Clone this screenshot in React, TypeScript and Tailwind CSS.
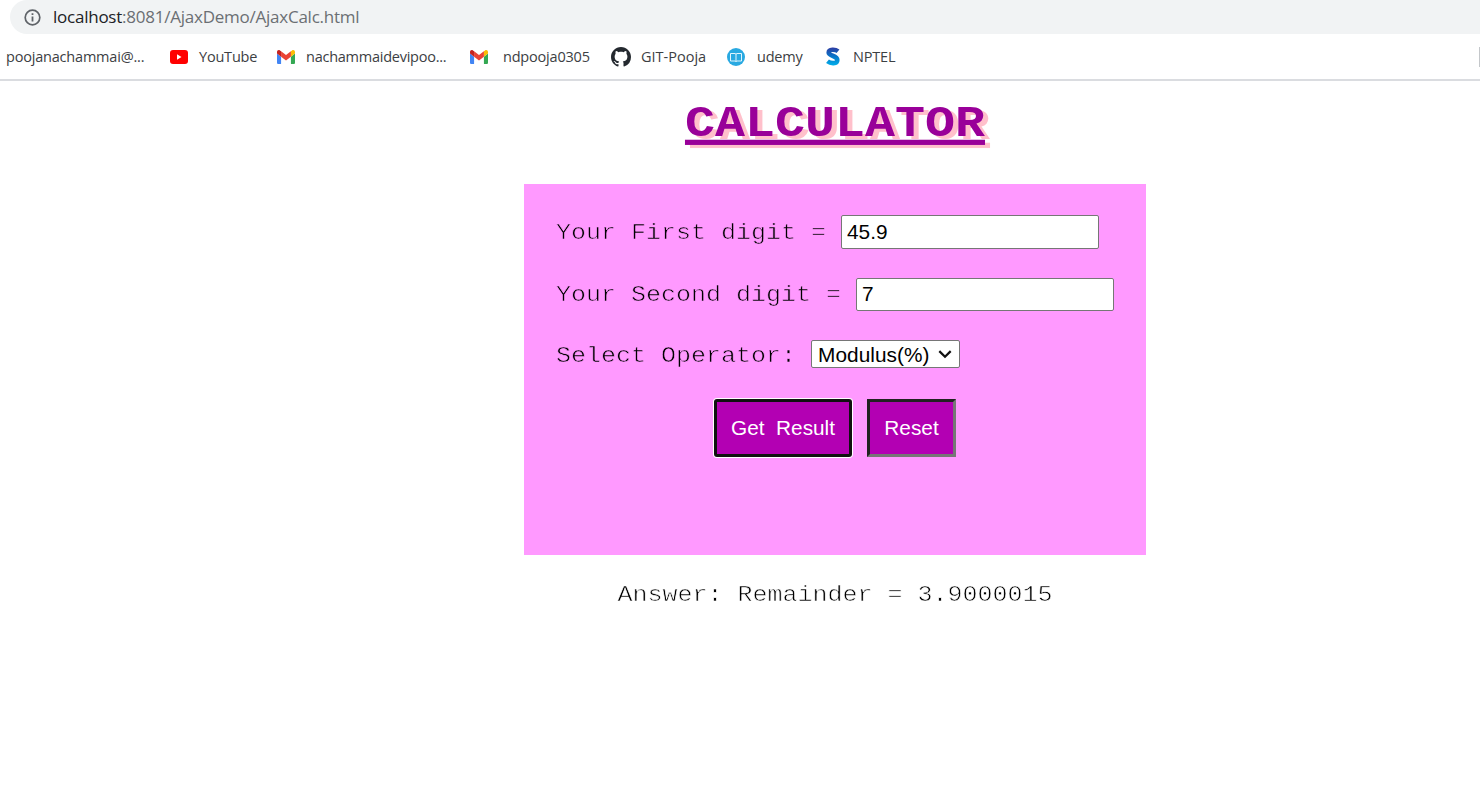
import { useState } from "react";
import type { ReactNode } from "react";

function InfoIcon() {
  return (
    <svg className="block size-[17px]" viewBox="0 0 17 17" fill="none">
      <circle cx="8.5" cy="8.5" r="7.3" stroke="#5f6368" strokeWidth="1.7" />
      <path d="M8.5 7.6v5M8.5 4.3v1.8" stroke="#5f6368" strokeWidth="1.8" />
    </svg>
  );
}

function YouTubeIcon() {
  return (
    <svg className="block h-[14px] w-[18px]" viewBox="0 0 18 14">
      <rect width="18" height="14" rx="3" fill="#f00" />
      <path d="M7 4.3v5.4L11.500 7z" fill="#fff" />
    </svg>
  );
}

function GmailIcon() {
  return (
    <svg className="block h-[14px] w-[18px]" viewBox="52 42 88 66" preserveAspectRatio="none">
      <path fill="#4285f4" d="M58 108h14V74L52 59v43c0 3.32 2.69 6 6 6" />
      <path fill="#34a853" d="M120 108h14c3.32 0 6-2.69 6-6V59l-20 15" />
      <path fill="#fbbc04" d="M120 48v26l20-15v-8c0-7.42-8.47-11.65-14.4-7.2" />
      <path fill="#ea4335" d="M72 74V48l24 18 24-18v26L96 92" />
      <path fill="#c5221f" d="M52 51v8l20 15V48l-5.6-4.2c-5.94-4.45-14.4-.22-14.4 7.2" />
    </svg>
  );
}

function GitHubIcon() {
  return (
    <svg className="block size-5" viewBox="0 0 16 16" fill="#24292f">
      <path d="M8 0C3.58 0 0 3.58 0 8c0 3.54 2.29 6.53 5.47 7.59.4.07.55-.17.55-.38 0-.19-.01-.82-.01-1.49-2.01.37-2.53-.49-2.69-.94-.09-.23-.48-.94-.82-1.13-.28-.15-.68-.52-.01-.53.63-.01 1.08.58 1.23.82.72 1.21 1.87.87 2.33.66.07-.52.28-.87.51-1.07-1.78-.2-3.64-.89-3.64-3.95 0-.87.31-1.59.82-2.15-.08-.2-.36-1.02.08-2.12 0 0 .67-.21 2.2.82.64-.18 1.32-.27 2-.27s1.36.09 2 .27c1.53-1.04 2.2-.82 2.2-.82.44 1.1.16 1.92.08 2.12.51.56.82 1.27.82 2.15 0 3.07-1.87 3.75-3.65 3.95.29.25.54.73.54 1.48 0 1.07-.01 1.93-.01 2.2 0 .21.15.46.55.38A8.01 8.01 0 0 0 16 8c0-4.42-3.58-8-8-8" />
    </svg>
  );
}

function BookIcon() {
  return (
    <svg className="block size-[18px]" viewBox="0 0 18 18" fill="none">
      <circle cx="9" cy="9" r="9" fill="#29a9e1" />
      <path d="M3.5 5.5H8l1 .6 1-.6h4.500v7.500H10l-1 .5-1-.5H3.500zM9 6v7.500" stroke="#e2f5fd" strokeWidth="1" />
    </svg>
  );
}

function SwayamIcon() {
  return (
    <svg className="block h-[19px] w-[14px]" viewBox="0 0 14 19" fill="none">
      <defs>
        <linearGradient id="swayam" x1="0" y1="0" x2="0" y2="19" gradientUnits="userSpaceOnUse">
          <stop offset="0" stopColor="#3038a0" />
          <stop offset="0.5" stopColor="#0877c9" />
          <stop offset="1" stopColor="#00b2ec" />
        </linearGradient>
      </defs>
      <path d="M12 4.200C9.700 2.400 2.700 1.600 2.700 5.700C2.700 9 11.300 8.600 11.300 12.900C11.300 17.300 4.500 16.700 1.500 14.300" stroke="url(#swayam)" strokeWidth="4.600" />
    </svg>
  );
}

function Bookmark({ icon, className, children }: { icon: ReactNode; className: string; children: ReactNode }) {
  return (
    <div className={`flex shrink-0 items-center whitespace-nowrap ${className}`}>
      {icon}
      <span>{children}</span>
    </div>
  );
}

function Typewriter({ className, children }: { className: string; children: ReactNode }) {
  return <span className={`inline-block origin-[0_77%] scale-y-[0.87] whitespace-pre ${className}`}>{children}</span>;
}

export default function App() {
  const [first, setFirst] = useState("45.9");
  const [second, setSecond] = useState("7");

  return (
    <div className="h-[793px] w-full overflow-hidden bg-white text-black">
      <header className="h-[81px] border-b-2 border-[#dadce0] font-['Open_Sans','Noto_Sans',sans-serif]">
        <div className="ml-[10px] flex h-[34px] items-center gap-[12px] rounded-l-full bg-[#f1f3f4] pl-[14px] text-[17px]">
          <InfoIcon />
          <span className="whitespace-nowrap tracking-[-0.24px] text-[#6b6f73]">
            <span className="text-[#202124]">localhost</span>:8081/AjaxDemo/AjaxCalc.html
          </span>
        </div>
        <nav className="flex h-[45px] items-center text-[14.500px] tracking-[-0.2px] text-[#3c4043]">
          <Bookmark icon={null} className="w-[170px] pl-[6px]">poojanachammai@...</Bookmark>
          <Bookmark icon={<YouTubeIcon />} className="w-[107px] gap-[11px]">YouTube</Bookmark>
          <Bookmark icon={<GmailIcon />} className="w-[193px] gap-[11px] tracking-[-0.25px]">nachammaidevipoo...</Bookmark>
          <Bookmark icon={<GmailIcon />} className="w-[141px] gap-[15px]">ndpooja0305</Bookmark>
          <Bookmark icon={<GitHubIcon />} className="w-[116px] gap-[10px] tracking-normal">GIT-Pooja</Bookmark>
          <Bookmark icon={<BookIcon />} className="w-[99px] gap-[12px]">udemy</Bookmark>
          <Bookmark icon={<SwayamIcon />} className="gap-[13px]">NPTEL</Bookmark>
          <div className="ml-auto h-5 w-px bg-[#c4c7ca]" />
        </nav>
      </header>

      <main className="ml-[524px] flex w-[622px] flex-col items-center font-['Courier_New','Liberation_Mono',monospace] text-[25px] leading-[28px]">
        <h1 className="mt-[13px] origin-[0_77%] scale-y-[0.87] text-[50px] font-bold leading-[57px] text-[#990099] underline decoration-[5.500px] underline-offset-[4px] [text-shadow:5px_3.500px_pink]">
          CALCULATOR
        </h1>
        <form className="mt-[33px] flex h-[371px] w-full flex-col bg-[#ff99ff] px-8 pt-[31px]" onSubmit={(e) => e.preventDefault()}>
          <label className="flex h-[34px] items-center">
            <Typewriter className="pt-px [-webkit-text-stroke:0.7px_#ff99ff]">{"Your First digit = "}</Typewriter>
            <input
              className="h-[34px] w-[258px] rounded-[2px] border border-[#767676] bg-white px-[5px] font-['Liberation_Sans',Arial,sans-serif] text-[20.800px]"
              value={first}
              onChange={(e) => setFirst(e.target.value)}
            />
          </label>
          <label className="mt-[29px] flex h-[33px] items-center">
            <Typewriter className="pt-px [-webkit-text-stroke:0.7px_#ff99ff]">{"Your Second digit = "}</Typewriter>
            <input
              className="h-[33px] w-[258px] rounded-[2px] border border-[#767676] bg-white px-[5px] pb-[2px] font-['Liberation_Sans',Arial,sans-serif] text-[20.800px]"
              value={second}
              onChange={(e) => setSecond(e.target.value)}
            />
          </label>
          <div className="mt-[29px] flex h-[28px] items-center">
            <Typewriter className="pt-[3px] [-webkit-text-stroke:0.7px_#ff99ff]">{"Select Operator: "}</Typewriter>
            <button
              type="button"
              className="flex h-[28px] w-[149px] items-center justify-between rounded-[2px] border border-[#767676] bg-white pl-[6px] pr-[7px] font-['Liberation_Sans',Arial,sans-serif] text-[20.800px]"
            >
              <span className="pt-[2px] tracking-[0.06px]">Modulus(%)</span>
              <svg className="size-[14px]" viewBox="0 0 14 14" fill="none">
                <path d="M1.300 4.100 7 9.800l5.700-5.700" stroke="#111" strokeWidth="2.200" />
              </svg>
            </button>
          </div>
          <div className="mt-[31px] flex justify-center gap-[15px] font-['Liberation_Sans',Arial,sans-serif] text-[20.800px] text-white">
            <button
              type="submit"
              className="h-[58px] w-[138px] whitespace-pre rounded-[3px] border-[3px] border-[#101010] bg-[#b300b3] shadow-[0_0_0_1px_white]"
            >
              {"Get  Result"}
            </button>
            <button
              type="reset"
              className="h-[58px] w-[89px] border-[3px] border-b-[#767676] border-l-[#212121] border-r-[#767676] border-t-[#212121] bg-[#b300b3]"
            >
              Reset
            </button>
          </div>
        </form>
        <p className="mt-[25px] whitespace-nowrap">
          <Typewriter className="pt-px [-webkit-text-stroke:0.7px_white]">Answer: Remainder = 3.9000015</Typewriter>
        </p>
      </main>
    </div>
  );
}
